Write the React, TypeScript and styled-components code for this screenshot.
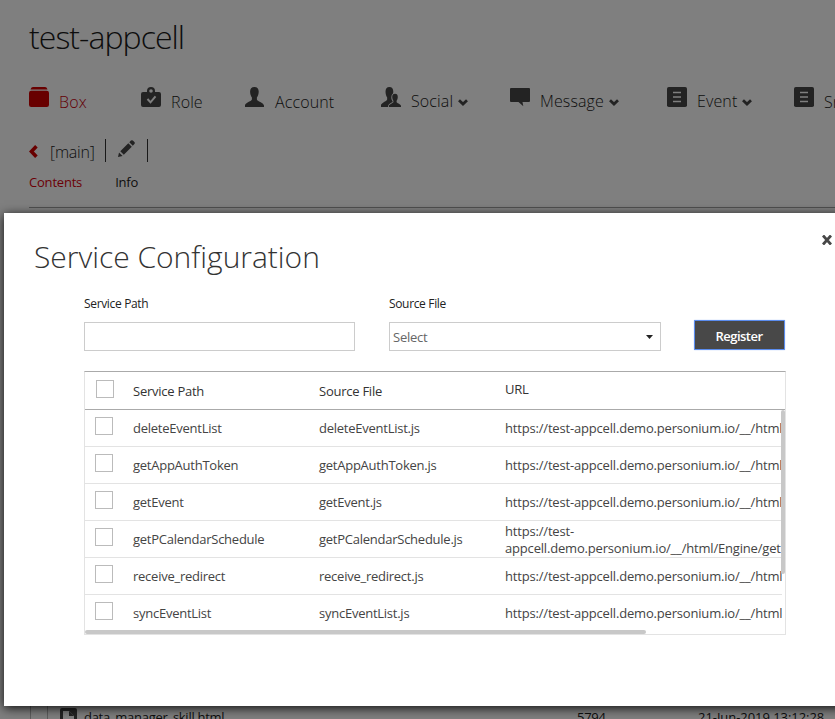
import React from 'react';
import styled, { createGlobalStyle } from 'styled-components';

const Global = createGlobalStyle`
  * { box-sizing: border-box; }
  body { margin: 0; background: #fff; font-family: "Open Sans", "Noto Sans", sans-serif; }
`;

const Page = styled.div`
  position: relative;
  height: 719px;
  overflow: hidden;
  display: flex;
  flex-direction: column;
  background: #fff;
  color: #1a1a1a;
`;
const CellName = styled.h1`
  margin: 14px 0 0 29px;
  height: 46px;
  line-height: 46px;
  font-size: 32px;
  font-weight: 300;
  letter-spacing: -0.95px;
`;
const Nav = styled.nav`
  display: flex;
  margin: 27px 0 0 29px;
  height: 30px;
`;
const NavItem = styled.a<{ $width: number; $active?: boolean }>`
  flex: 0 0 ${p => p.$width}px;
  display: flex;
  color: ${p => (p.$active ? '#c8000c' : '#1a1a1a')};
  svg { flex: none; }
`;
const NavIcon = styled.svg<{ $active?: boolean }>`
  width: 20px;
  height: 20px;
  margin-right: 10px;
  fill: ${p => (p.$active ? '#d00000' : '#474747')};
`;
const NavLabel = styled.span<{ $raised?: boolean }>`
  height: 20px;
  line-height: 20px;
  margin-top: ${p => (p.$raised ? 4 : 5)}px;
  font-size: 16px;
  font-weight: 300;
  letter-spacing: 0.12px;
  white-space: nowrap;
`;
const Caret = styled.svg`
  width: 10px;
  height: 7px;
  margin: 12px 0 0 5px;
  fill: none;
  stroke: #474747;
  stroke-width: 2.8;
`;
const Crumbs = styled.div`
  display: flex;
  align-items: flex-start;
  margin: 22px 0 0 29px;
  height: 24px;
`;
const BackIcon = styled.svg`
  width: 9px;
  height: 13px;
  margin-top: 6px;
  fill: none;
  stroke: #d00000;
  stroke-width: 3.6;
`;
const BoxName = styled.span`
  width: 56px;
  margin-left: 12px;
  padding-top: 2px;
  line-height: 22px;
  font-size: 16px;
  font-weight: 300;
  letter-spacing: -0.2px;
`;
const EditCell = styled.div`
  width: 43px;
  height: 23px;
  padding: 1px 0 0 12px;
  border: solid #333;
  border-width: 0 1px;
  margin-left: -1px;
  svg { display: block; width: 17px; height: 17px; fill: #474747; }
`;
const Tabs = styled.div`
  display: flex;
  margin: 9px 0 0 29px;
  height: 20px;
  gap: 33px;
`;
const Tab = styled.span<{ $active?: boolean }>`
  line-height: 20px;
  font-size: 13px;
  letter-spacing: -0.2px;
  color: ${p => (p.$active ? '#d8000c' : '#1a1a1a')};
`;
const Rule = styled.hr`
  margin: 15px 0 0 29px;
  border: 0;
  height: 1px;
  background: #a0a0a0;
  flex: none;
`;
const FileRow = styled.div`
  display: flex;
  margin: auto 0 -11px 30px;
  height: 30px;
  line-height: 35px;
  font-size: 13px;
  letter-spacing: -0.28px;
  border-left: 1px solid #bbb;
`;
const SelectCell = styled.div`
  width: 17px;
  flex: none;
  border-right: 1px solid #bbb;
`;
const FileIcon = styled.svg`
  flex: none;
  width: 17px;
  height: 20px;
  margin: 8px 7px 0 12px;
`;
const FileCell = styled.span<{ $width?: number }>`
  flex: none;
  width: ${p => (p.$width ? p.$width + 'px' : 'auto')};
  letter-spacing: ${p => (p.$width ? 'inherit' : '-0.05px')};
`;

const Backdrop = styled.div`
  position: absolute;
  inset: 0;
  background: rgba(0, 0, 0, 0.5);
`;
const Dialog = styled.section`
  position: absolute;
  left: 4px;
  top: 213px;
  width: 848px;
  height: 493px;
  background: #fff;
  box-shadow: 0 2px 10px rgba(0, 0, 0, 0.9);
`;
const DialogHead = styled.header`
  display: flex;
  justify-content: space-between;
  height: 84px;
  padding: 22px 20px 0 30px;
`;
const DialogTitle = styled.h2`
  margin: 0;
  line-height: 44px;
  font-size: 30px;
  font-weight: 300;
  color: #333;
  letter-spacing: -0.02px;
`;
const CloseIcon = styled.svg`
  width: 10px;
  height: 10px;
  fill: none;
  stroke: #474747;
  stroke-width: 2.8;
`;
const Form = styled.div`
  display: flex;
  align-items: flex-end;
  padding-left: 80px;
  height: 54px;
`;
const Field = styled.label`
  display: flex;
  flex-direction: column;
  width: 272px;
  margin-right: 33px;
  font-size: 12px;
  letter-spacing: -0.34px;
  line-height: 14px;
  color: #222;
`;
const Control = styled.div<{ $short?: boolean }>`
  display: flex;
  align-items: center;
  justify-content: space-between;
  width: ${p => (p.$short ? 271 : 272)}px;
  height: 29px;
  margin-top: 11px;
  padding: 0 7px 0 3px;
  border: 1px solid #ccc;
  font-size: 13px;
  letter-spacing: -0.25px;
  color: #666;
  svg { width: 7px; height: 4px; fill: #222; }
`;
const RegisterButton = styled.button`
  width: 91px;
  height: 30px;
  margin: 0 0 1px -0.5px;
  padding: 1px 0 0;
  border: 1px solid #5b8def;
  border-radius: 1px;
  box-shadow: 0 0 1px #5b8def;
  background: #484848;
  color: #fff;
  font: 600 13px "Open Sans", sans-serif;
  letter-spacing: -0.5px;
`;
const Table = styled.div`
  display: flex;
  flex-direction: column;
  width: 702px;
  height: 264px;
  margin: 20px 0 0 80px;
  border: 1px solid #e3e3e3;
  border-top-color: #aaa;
  font-size: 13px;
  letter-spacing: -0.25px;
  position: relative;
`;
const Row = styled.div<{ $head?: boolean }>`
  flex: none;
  display: grid;
  grid-template-columns: 48px 186px 186px 1fr;
  align-items: center;
  width: ${p => (p.$head ? 700 : 697)}px;
  height: ${p => (p.$head ? 38 : 37)}px;
  border-bottom: 1px solid ${p => (p.$head ? '#aaa' : '#e3e3e3')};
  color: ${p => (p.$head ? '#333' : '#444')};
  overflow: hidden;
`;
const Checkbox = styled.span<{ $head?: boolean }>`
  width: 18px;
  height: 18px;
  margin-left: ${p => (p.$head ? 11 : 10)}px;
  margin-bottom: ${p => (p.$head ? 3 : 4)}px;
  border: 1px solid #bbb;
`;
const Cell = styled.span<{ $raised?: boolean }>`
  line-height: 17px;
  padding-top: ${p => (p.$raised ? 0 : 1)}px;
  margin-bottom: ${p => (p.$raised ? 2 : 0)}px;
`;
const UrlCell = styled.span`
  line-height: 17px;
  padding-top: 1px;
  overflow: hidden;
  white-space: pre;
  letter-spacing: -0.18px;
`;
const Body = styled.div`
  flex: 1;
  min-height: 0;
  overflow: hidden;
  ${Row}:last-child { border-bottom-color: transparent; }
`;
const VThumb = styled.div`
  position: absolute;
  right: 0;
  top: 38px;
  width: 4px;
  height: 164px;
  border-radius: 2px;
  background: #c8c8c8;
`;
const HThumb = styled.div`
  position: absolute;
  left: 0;
  bottom: 0;
  width: 561px;
  height: 4px;
  border-radius: 2px;
  background: #c8c8c8;
`;

const Person = 'M10 0C6.900 0 5.600 2 5.700 4.800c0 2 .6 4.300 1.800 5.600v2.200C7.200 14.400 1 15.600 .4 18.600V20h19.200v-1.400c-.6-3-6.800-4.200-7.100-6v-2.200c1.200-1.300 1.800-3.600 1.800-5.600C14.400 2 13.100 0 10 0z';

const icons: Record<string, React.ReactNode> = {
  box: <><path d="M4 0h12c1 0 2 .8 2.500 2.500h-17C2 .8 3 0 4 0z" /><rect y="3.700" width="20" height="16.300" rx="2.200" /></>,
  role: (
    <>
      <path fillRule="evenodd" d="M10 0a4 4 0 0 1 4 4v1h4a2 2 0 0 1 2 2v11a2 2 0 0 1-2 2H2a2 2 0 0 1-2-2V7a2 2 0 0 1 2-2h4V4a4 4 0 0 1 4-4zm0 2.200a1.800 1.800 0 1 0 0 3.600a1.800 1.800 0 0 0 0-3.600z" />
      <path d="M6.500 12l3 3.300 5-6" fill="none" stroke="#fff" strokeWidth="2" />
    </>
  ),
  account: <path transform="translate(-.6 0)" d={Person} />,
  social: (
    <>
      <path transform="translate(-.6 0) scale(.9 1)" d={Person} />
      <path transform="translate(7.600 6.800) scale(.64 .66)" d={Person} stroke="#fff" strokeWidth="2.600" paintOrder="stroke" />
    </>
  ),
  message: <path d="M1 1h18a1 1 0 0 1 1 1v12a1 1 0 0 1-1 1h-6.500l.8 4.200L8.500 15H1a1 1 0 0 1-1-1V2a1 1 0 0 1 1-1z" />,
  list: <><rect width="20" height="20" rx="1.800" /><path d="M6 5.500h8M6 10h8M6 14.500h8" stroke="#fff" strokeWidth="1.700" /></>,
};

const nav = [
  { label: 'Box', icon: 'box', width: 112, active: true },
  { label: 'Role', icon: 'role', width: 104 },
  { label: 'Account', icon: 'account', width: 136 },
  { label: 'Social', icon: 'social', width: 129, menu: true },
  { label: 'Message', icon: 'message', width: 157, menu: true },
  { label: 'Event', icon: 'list', width: 127, menu: true },
  { label: 'Snapshot', icon: 'list', width: 120 },
];

const base = 'https://test-appcell.demo.personium.io/__/html/Engine/';
const services = ['deleteEventList', 'getAppAuthToken', 'getEvent', 'getPCalendarSchedule', 'receive_redirect', 'syncEventList'];
const urlOf = (name: string) =>
  name === 'getPCalendarSchedule' ? base.replace('test-', 'test-\n') + name : base + name;

export default function App() {
  return (
    <Page>
      <Global />
      <CellName>test-appcell</CellName>
      <Nav>
        {nav.map(n => (
          <NavItem key={n.label} $width={n.width} $active={n.active}>
            <NavIcon viewBox="0 0 20 20" $active={n.active}>{icons[n.icon]}</NavIcon>
            <NavLabel $raised={n.menu}>{n.label}</NavLabel>
            {n.menu && <Caret viewBox="0 0 10 7"><path d="M1 1.200l4 3.800 4-3.800" /></Caret>}
          </NavItem>
        ))}
      </Nav>
      <Crumbs>
        <BackIcon viewBox="0 0 9 13"><path d="M7.400 1.300L2.400 6.500l5 5.200" /></BackIcon>
        <BoxName>[main]</BoxName>
        <EditCell>
          <svg viewBox="0 0 17 17">
            <path d="M0 17l1-4.600L4.600 16zM2.300 11.200l8-8 3.500 3.500-8 8zM11.300 2.200l1.600-1.600a1.500 1.500 0 0 1 2 0l1.500 1.500a1.500 1.500 0 0 1 0 2l-1.600 1.600z" />
          </svg>
        </EditCell>
      </Crumbs>
      <Tabs>
        <Tab $active>Contents</Tab>
        <Tab>Info</Tab>
      </Tabs>
      <Rule />
      <FileRow>
        <SelectCell />
        <FileIcon viewBox="0 0 17 20">
          <path fill="#474747" fillRule="evenodd" d="M2 0h13a2 2 0 0 1 2 2v16a2 2 0 0 1-2 2H2a2 2 0 0 1-2-2V2a2 2 0 0 1 2-2zM3 3v14h11V8l-5-5z" />
          <path fill="#474747" d="M9 3v5h5z" />
        </FileIcon>
        <FileCell $width={493}>data_manager_skill.html</FileCell>
        <FileCell $width={121}>5794</FileCell>
        <FileCell>21-Jun-2019 13:12:28</FileCell>
      </FileRow>

      <Backdrop />
      <Dialog>
        <DialogHead>
          <DialogTitle>Service Configuration</DialogTitle>
          <CloseIcon viewBox="0 0 10 10"><path d="M1 .5l8 9M9 .5l-8 9" /></CloseIcon>
        </DialogHead>
        <Form>
          <Field>Service Path<Control $short /></Field>
          <Field>
            Source File
            <Control>
              Select
              <svg viewBox="0 0 7 4"><path d="M0 0h7L3.500 4z" /></svg>
            </Control>
          </Field>
          <RegisterButton>Register</RegisterButton>
        </Form>
        <Table>
          <Row $head>
            <Checkbox $head />
            <Cell>Service Path</Cell>
            <Cell>Source File</Cell>
            <Cell $raised>URL</Cell>
          </Row>
          <Body>
            {services.map(s => (
              <Row key={s}>
                <Checkbox />
                <Cell>{s}</Cell>
                <Cell>{s}.js</Cell>
                <UrlCell>{urlOf(s)}</UrlCell>
              </Row>
            ))}
          </Body>
          <VThumb />
          <HThumb />
        </Table>
      </Dialog>
    </Page>
  );
}
